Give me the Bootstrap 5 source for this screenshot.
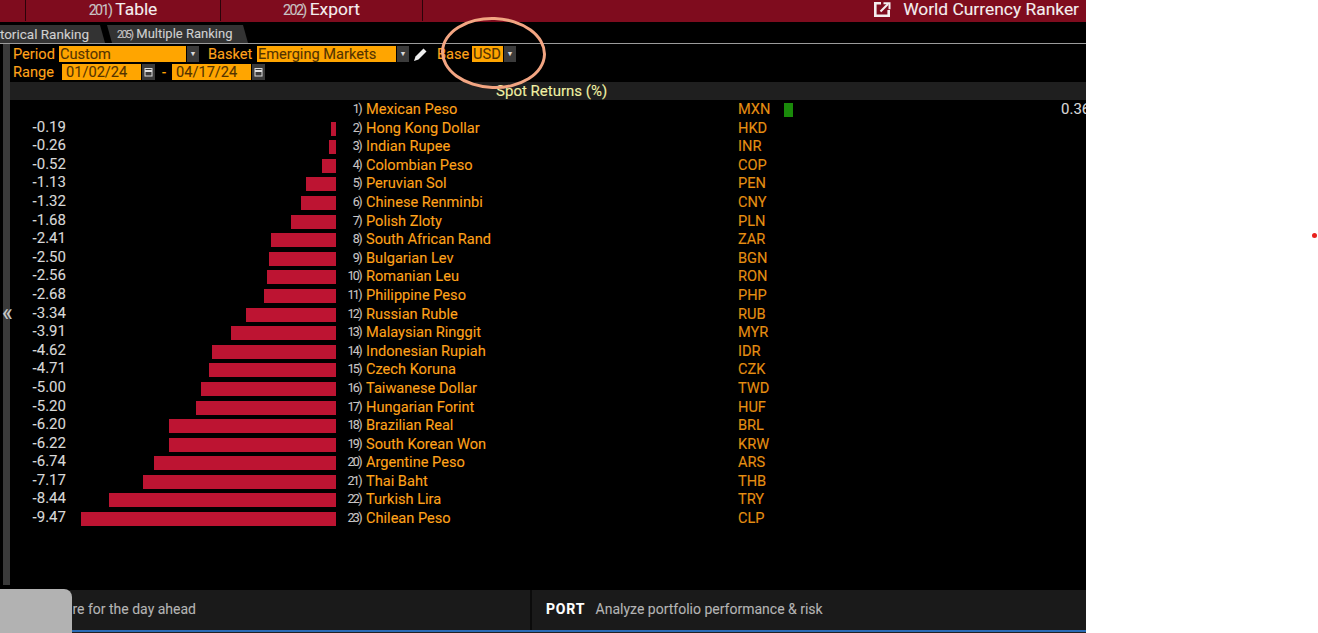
<!DOCTYPE html>
<html lang="en">
<head>
<meta charset="utf-8">
<title>World Currency Ranker</title>
<link href="https://cdn.jsdelivr.net/npm/bootstrap@5.3.0/dist/css/bootstrap.min.css" rel="stylesheet">
<style>
html,body{height:633px;overflow:hidden;background:#fff}
body{font-family:Roboto,"Liberation Sans",sans-serif;font-size:14.6px;line-height:18px;color:#ffa31a;-webkit-text-stroke:.1px}
.term{width:1086px;height:633px;background:#000;overflow:hidden}
.hdr{height:22px;background:#7f0c1e;color:#f4eeee;font-size:17.4px;line-height:18px;flex:none}
.hcell{border-right:1px solid #2b0309;height:21px;white-space:nowrap}
.hc0{width:26px}.hc1{width:195px}.hc2{width:202px}
.num{color:#c9c5c5;letter-spacing:-1.6px;font-size:.82em;margin-right:4px}
.hright{margin-left:auto;padding-right:7px;height:21px;padding-bottom:3px}
.hico{margin-right:12px;flex:none}
.tabs{height:22px;border-bottom:1px solid #9b9b9b;flex:none;overflow:hidden;padding-top:3px}
.tabx{background:#333;color:#d0d0d0;font-size:13.5px;line-height:18px;height:18px;white-space:nowrap}
.t1{width:105px;text-indent:-20px;overflow:hidden;clip-path:polygon(0 0,calc(100% - 5px) 0,100% 100%,0 100%)}
.t2{width:141px;margin-left:2px;padding-left:10px;font-size:13px;clip-path:polygon(0 0,calc(100% - 5px) 0,100% 100%,5px 100%)}
.mainz{flex:1;min-height:0}
.sbar{width:7px;margin-left:3px;margin-bottom:5px;background:#3a3a3a;flex:none}
.chev{position:absolute;left:2px;top:305px;color:#c8c8c8;font-size:23px;line-height:18px}
.formz{height:38px;padding-top:1px;flex:none}
.frow{height:18px;margin-left:3px;white-space:nowrap}
.fld{background:#ffa500;color:#533300;height:16px;line-height:16px;padding-left:1px;white-space:nowrap;flex:none}
.arr{width:12px;height:16px;background:#3b3b3b;color:#ddd;margin-left:1px;font-size:7px;line-height:16px;text-align:center;flex:none}
.w1{width:127px}.w2{width:139px}.w3{width:31px}
.d1,.d2{width:79px;padding-left:4px}
.cal{width:13px;height:16px;background:#3b3b3b;margin-left:1px;flex:none}
.l1{width:46px}.l2{width:49px;margin-left:9px}.l3{width:35px;margin-left:9px}.l4{width:49px}.l5{width:10px;margin-left:7px;color:#ffa500}
.pen{margin-left:4px;width:15px;height:15px;flex:none}
.band{height:18px;background:#1f1f1f;color:#f1f0a4;text-align:center;flex:none;padding-left:3px;line-height:18px;font-size:15px}
.rowz{height:18.6px;line-height:18.6px;white-space:nowrap}
.rv{width:56px;text-align:right;color:#d8d8d8;position:relative;top:-1px;font-size:15px}
.rb{width:270px;height:100%}
.bar{height:14px;background:#bd1432;margin-top:3px}
.rn{width:27px;text-align:right;color:#c9c5c5;font-size:12.5px;letter-spacing:-1.6px;padding-right:2px}
.rname{width:375px;padding-left:3px}
.rcode{width:46px;color:#e58f12}
.grn{height:14px;width:9px;background:#1a8a0a;margin-top:3px}
.val{margin-left:268px;color:#d8d8d8;font-size:15px}
.foot{height:40px;background:#1a1a1a;flex:none;color:#b4b4b4;font-size:14px}
.fa{width:532px;line-height:38px;border-right:2px solid #0b0b0b;white-space:nowrap;overflow:hidden}
.fatxt{display:block;width:196px;text-align:right}
.fb{padding-left:14px;line-height:38px;white-space:nowrap}
.fb b{color:#fff;margin-right:7px;letter-spacing:.8px}
.blue{height:2px;background:#2a6bb5;flex:none}
.tailz{height:1px;background:#222;flex:none}
.glass{position:absolute;left:0;top:589px;width:72px;height:44px;background:#b2b2b2;border-top-right-radius:8px}
.ring{position:absolute;left:441px;top:17px;width:105px;height:72px;border:3px solid #f2a582;border-radius:50%;transform:rotate(2deg)}
.dot{position:absolute;left:1312px;top:233px;width:5px;height:5px;border-radius:50%;background:#e8201c}
</style>
</head>
<body class="position-relative m-0">
<div class="term d-flex flex-column">
  <div class="hdr d-flex align-items-start">
    <div class="hcell hc0"></div>
    <div class="hcell hc1 text-center"><span class="num">201)</span>Table</div>
    <div class="hcell hc2 text-center"><span class="num">202)</span>Export</div>
    <div class="hright d-flex align-items-center">
      <svg class="hico" width="17" height="15" viewBox="0 0 17 15" fill="none" stroke="#f4eeee" stroke-width="2.600"><path d="M7 1.300H1.300v12.400h13.400V8"/><path d="M6.500 9.500 14 2" stroke-width="2.200"/><path d="M9.500 1.300h6v6" stroke-width="2"/></svg>
      World Currency Ranker
    </div>
  </div>
  <div class="tabs d-flex">
    <div class="tabx t1">Historical Ranking</div>
    <div class="tabx t2"><span class="num">205)</span>Multiple Ranking</div>
  </div>
  <div class="mainz d-flex">
    <div class="sbar"></div>
    <div class="flex-grow-1 d-flex flex-column">
      <div class="formz">
        <div class="frow d-flex align-items-center">
          <span class="l1">Period</span><div class="fld w1">Custom</div><div class="arr">▼</div>
          <span class="l2">Basket</span><div class="fld w2">Emerging Markets</div><div class="arr">▼</div>
          <svg class="pen" viewBox="0 0 15 15" fill="#eee"><path d="M1 14l1.500-4.500L10.500 1.500l3 3L5.500 12.500z"/></svg>
          <span class="l3">Base</span><div class="fld w3">USD</div><div class="arr">▼</div>
        </div>
        <div class="frow d-flex align-items-center">
          <span class="l4">Range</span><div class="fld d1">01/02/24</div>
          <div class="cal d-flex align-items-center justify-content-center"><svg width="9" height="10" viewBox="0 0 9 10" fill="none" stroke="#ddd"><rect x="1" y="1.500" width="7" height="7.500"/><path d="M1 4h7" stroke-width="2"/></svg></div>
          <span class="l5">-</span><div class="fld d2">04/17/24</div>
          <div class="cal d-flex align-items-center justify-content-center"><svg width="9" height="10" viewBox="0 0 9 10" fill="none" stroke="#ddd"><rect x="1" y="1.500" width="7" height="7.500"/><path d="M1 4h7" stroke-width="2"/></svg></div>
        </div>
      </div>
      <div class="band">Spot Returns (%)</div>
      <div class="rowsz">
        <div class="rowz d-flex"><div class="rv"></div><div class="rb"></div><div class="rn">1)</div><div class="rname">Mexican Peso</div><div class="rcode">MXN</div><div class="grn"></div><div class="val">0.36</div></div>
        <div class="rowz d-flex"><div class="rv">-0.19</div><div class="rb d-flex justify-content-end"><div class="bar" style="width:5px"></div></div><div class="rn">2)</div><div class="rname">Hong Kong Dollar</div><div class="rcode">HKD</div></div>
        <div class="rowz d-flex"><div class="rv">-0.26</div><div class="rb d-flex justify-content-end"><div class="bar" style="width:7px"></div></div><div class="rn">3)</div><div class="rname">Indian Rupee</div><div class="rcode">INR</div></div>
        <div class="rowz d-flex"><div class="rv">-0.52</div><div class="rb d-flex justify-content-end"><div class="bar" style="width:14px"></div></div><div class="rn">4)</div><div class="rname">Colombian Peso</div><div class="rcode">COP</div></div>
        <div class="rowz d-flex"><div class="rv">-1.13</div><div class="rb d-flex justify-content-end"><div class="bar" style="width:30px"></div></div><div class="rn">5)</div><div class="rname">Peruvian Sol</div><div class="rcode">PEN</div></div>
        <div class="rowz d-flex"><div class="rv">-1.32</div><div class="rb d-flex justify-content-end"><div class="bar" style="width:35px"></div></div><div class="rn">6)</div><div class="rname">Chinese Renminbi</div><div class="rcode">CNY</div></div>
        <div class="rowz d-flex"><div class="rv">-1.68</div><div class="rb d-flex justify-content-end"><div class="bar" style="width:45px"></div></div><div class="rn">7)</div><div class="rname">Polish Zloty</div><div class="rcode">PLN</div></div>
        <div class="rowz d-flex"><div class="rv">-2.41</div><div class="rb d-flex justify-content-end"><div class="bar" style="width:65px"></div></div><div class="rn">8)</div><div class="rname">South African Rand</div><div class="rcode">ZAR</div></div>
        <div class="rowz d-flex"><div class="rv">-2.50</div><div class="rb d-flex justify-content-end"><div class="bar" style="width:67px"></div></div><div class="rn">9)</div><div class="rname">Bulgarian Lev</div><div class="rcode">BGN</div></div>
        <div class="rowz d-flex"><div class="rv">-2.56</div><div class="rb d-flex justify-content-end"><div class="bar" style="width:69px"></div></div><div class="rn">10)</div><div class="rname">Romanian Leu</div><div class="rcode">RON</div></div>
        <div class="rowz d-flex"><div class="rv">-2.68</div><div class="rb d-flex justify-content-end"><div class="bar" style="width:72px"></div></div><div class="rn">11)</div><div class="rname">Philippine Peso</div><div class="rcode">PHP</div></div>
        <div class="rowz d-flex"><div class="rv">-3.34</div><div class="rb d-flex justify-content-end"><div class="bar" style="width:90px"></div></div><div class="rn">12)</div><div class="rname">Russian Ruble</div><div class="rcode">RUB</div></div>
        <div class="rowz d-flex"><div class="rv">-3.91</div><div class="rb d-flex justify-content-end"><div class="bar" style="width:105px"></div></div><div class="rn">13)</div><div class="rname">Malaysian Ringgit</div><div class="rcode">MYR</div></div>
        <div class="rowz d-flex"><div class="rv">-4.62</div><div class="rb d-flex justify-content-end"><div class="bar" style="width:124px"></div></div><div class="rn">14)</div><div class="rname">Indonesian Rupiah</div><div class="rcode">IDR</div></div>
        <div class="rowz d-flex"><div class="rv">-4.71</div><div class="rb d-flex justify-content-end"><div class="bar" style="width:127px"></div></div><div class="rn">15)</div><div class="rname">Czech Koruna</div><div class="rcode">CZK</div></div>
        <div class="rowz d-flex"><div class="rv">-5.00</div><div class="rb d-flex justify-content-end"><div class="bar" style="width:135px"></div></div><div class="rn">16)</div><div class="rname">Taiwanese Dollar</div><div class="rcode">TWD</div></div>
        <div class="rowz d-flex"><div class="rv">-5.20</div><div class="rb d-flex justify-content-end"><div class="bar" style="width:140px"></div></div><div class="rn">17)</div><div class="rname">Hungarian Forint</div><div class="rcode">HUF</div></div>
        <div class="rowz d-flex"><div class="rv">-6.20</div><div class="rb d-flex justify-content-end"><div class="bar" style="width:167px"></div></div><div class="rn">18)</div><div class="rname">Brazilian Real</div><div class="rcode">BRL</div></div>
        <div class="rowz d-flex"><div class="rv">-6.22</div><div class="rb d-flex justify-content-end"><div class="bar" style="width:167px"></div></div><div class="rn">19)</div><div class="rname">South Korean Won</div><div class="rcode">KRW</div></div>
        <div class="rowz d-flex"><div class="rv">-6.74</div><div class="rb d-flex justify-content-end"><div class="bar" style="width:182px"></div></div><div class="rn">20)</div><div class="rname">Argentine Peso</div><div class="rcode">ARS</div></div>
        <div class="rowz d-flex"><div class="rv">-7.17</div><div class="rb d-flex justify-content-end"><div class="bar" style="width:193px"></div></div><div class="rn">21)</div><div class="rname">Thai Baht</div><div class="rcode">THB</div></div>
        <div class="rowz d-flex"><div class="rv">-8.44</div><div class="rb d-flex justify-content-end"><div class="bar" style="width:227px"></div></div><div class="rn">22)</div><div class="rname">Turkish Lira</div><div class="rcode">TRY</div></div>
        <div class="rowz d-flex"><div class="rv">-9.47</div><div class="rb d-flex justify-content-end"><div class="bar" style="width:255px"></div></div><div class="rn">23)</div><div class="rname">Chilean Peso</div><div class="rcode">CLP</div></div>
      </div>
    </div>
  </div>
  <div class="foot d-flex">
    <div class="fa"><span class="fatxt">Prepare for the day ahead</span></div>
    <div class="fb"><b>PORT</b> Analyze portfolio performance &amp; risk</div>
  </div>
  <div class="blue"></div>
  <div class="tailz"></div>
</div>
<div class="chev">«</div>
<div class="glass"></div>
<div class="ring"></div>
<div class="dot"></div>
</body>
</html>
